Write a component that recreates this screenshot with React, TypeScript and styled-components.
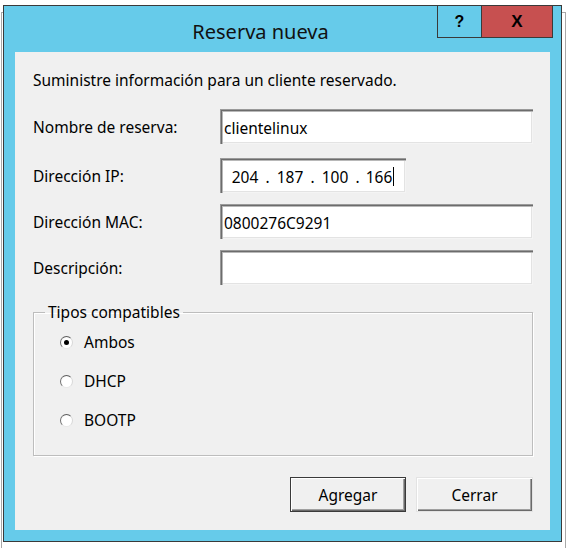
import styled, { createGlobalStyle } from 'styled-components';

const GlobalStyle = createGlobalStyle`
  html, body {
    margin: 0;
    padding: 0;
    background: #ffffff;
  }
  body {
    font-family: "Noto Sans", "Open Sans", sans-serif;
    color: #000;
  }
`;

const Desktop = styled.div`
  position: relative;
  width: 569px;
  height: 548px;
  overflow: hidden;
  box-sizing: border-box;
  padding: 5px 0 0 3px;
`;

// window that sits behind the dialog
const BackWindow = styled.div`
  position: absolute;
  left: 1px;
  top: 12px;
  width: 563px;
  height: 600px;
  border: 1px solid #a8a8a8;
  background: #ffffff;
`;

const Dialog = styled.div`
  position: relative;
  width: 559px;
  height: 537px;
  box-sizing: border-box;
  border: 1px solid #3a3a3a;
  background: #66cbea;
  display: flex;
  flex-direction: column;
`;

const TitleBar = styled.div`
  height: 46px;
  display: flex;
  align-items: flex-start;
  flex-shrink: 0;
`;

const Title = styled.div`
  flex: 1;
  text-align: center;
  padding-left: 80px;
  padding-top: 12px;
  font-size: 20px;
  line-height: 28px;
  color: #111;
`;

const CaptionButton = styled.div<{ $close?: boolean }>`
  margin-top: -1px;
  height: 33px;
  box-sizing: border-box;
  width: ${(p) => (p.$close ? '72px' : '44px')};
  border: 1px solid #3a3a3a;
  border-right: ${(p) => (p.$close ? '1px solid #3a3a3a' : 'none')};
  margin-right: ${(p) => (p.$close ? '8px' : '0')};
  background: ${(p) => (p.$close ? '#c75050' : '#66cbea')};
  display: flex;
  align-items: center;
  justify-content: center;
  font-family: "Liberation Sans", Arial, sans-serif;
  font-weight: bold;
  font-size: ${(p) => (p.$close ? '17px' : '16px')};
  color: #000;
`;

const Client = styled.div`
  flex: 1;
  margin: 0 11px 11px;
  background: #f0f0f0;
  box-sizing: border-box;
  padding: 18px 17px 0 18px;
  display: flex;
  flex-direction: column;
  font-size: 15.5px;
  line-height: 20px;
`;

const Intro = styled.div`
  height: 20px;
`;

const Form = styled.div`
  margin-top: 19px;
  display: flex;
  flex-direction: column;
  gap: 11px;
`;

const Row = styled.div<{ $shift?: number }>`
  display: flex;
  align-items: center;
  margin-top: ${(p) => p.$shift ?? 0}px;
`;

const Label = styled.div`
  width: 187px;
  flex-shrink: 0;
`;

const TextBox = styled.div<{ $width?: number }>`
  width: ${(p) => p.$width ?? 313}px;
  height: 35px;
  box-sizing: border-box;
  background: #ffffff;
  padding: 2px 4px 0 4px;
  line-height: 24px;
  box-shadow: inset 1px 1px 0 #9a9a9a, inset 2px 2px 0 #6c6c6c,
    inset 3px 3px 0 #b8b8b8, inset -1px -1px 0 #f4f4f4,
    inset -2px -2px 0 #e3e3e3;
  display: flex;
  align-items: center;
`;

const IpSegment = styled.span`
  width: 36px;
  text-align: center;
  display: inline-flex;
  justify-content: center;
  align-items: center;
`;

const IpDot = styled.span`
  width: 9px;
  text-align: center;
`;

const Caret = styled.span`
  display: inline-block;
  width: 1px;
  height: 19px;
  background: #000;
  margin-left: 1px;
`;

const Group = styled.fieldset`
  margin: 17px 0 0 0;
  padding: 0;
  height: 154px;
  box-sizing: border-box;
  border: 1px solid #bdbdbd;
  box-shadow: inset 1px 1px 0 #fff, 1px 1px 0 #fff;
`;

const Legend = styled.legend`
  margin-left: 11px;
  padding: 0 3px;
  font-size: 15.5px;
  line-height: 20px;
`;

const RadioList = styled.div`
  display: flex;
  flex-direction: column;
  gap: 19px;
  padding: 10px 0 0 26px;
`;

const RadioRow = styled.div`
  display: flex;
  align-items: center;
  gap: 6px;
  height: 20px;
`;

const RadioCircle = styled.span<{ $checked?: boolean }>`
  width: 13px;
  height: 13px;
  box-sizing: border-box;
  border-radius: 50%;
  border: 1px solid;
  border-color: #5e5e5e #d8d8d8 #e8e8e8 #6e6e6e;
  background: radial-gradient(circle at 60% 60%, #ffffff 55%, #f0f0f0 100%);
  display: flex;
  align-items: center;
  justify-content: center;
  margin-right: 5px;

  &::after {
    content: '';
    width: 5px;
    height: 5px;
    border-radius: 50%;
    background: #000;
    display: ${(p) => (p.$checked ? 'block' : 'none')};
  }
`;

const ButtonBar = styled.div`
  margin-top: 21px;
  display: flex;
  justify-content: flex-end;
  gap: 10px;
`;

const Button = styled.div<{ $default?: boolean }>`
  width: ${(p) => (p.$default ? '116px' : '117px')};
  height: 35px;
  box-sizing: border-box;
  background: #f0f0f0;
  display: flex;
  align-items: center;
  justify-content: center;
  border: 1px solid ${(p) => (p.$default ? '#3a3a3a' : '#e3e3e3')};
  box-shadow: inset 1px 1px 0 #ffffff, inset -1px -1px 0 #6a6a6a,
    inset -2px -2px 0 #a0a0a0;
`;

export default function App() {
  return (
    <Desktop>
      <GlobalStyle />
      <BackWindow />
      <Dialog>
        <TitleBar>
          <Title>Reserva nueva</Title>
          <CaptionButton>?</CaptionButton>
          <CaptionButton $close>X</CaptionButton>
        </TitleBar>
        <Client>
          <Intro>Suministre información para un cliente reservado.</Intro>
          <Form>
            <Row>
              <Label>Nombre de reserva:</Label>
              <TextBox>clientelinux</TextBox>
            </Row>
            <Row $shift={3}>
              <Label>Dirección IP:</Label>
              <TextBox $width={186} style={{ paddingLeft: 7 }}>
                <IpSegment>204</IpSegment>
                <IpDot>.</IpDot>
                <IpSegment>187</IpSegment>
                <IpDot>.</IpDot>
                <IpSegment>100</IpSegment>
                <IpDot>.</IpDot>
                <IpSegment>
                  166
                  <Caret />
                </IpSegment>
              </TextBox>
            </Row>
            <Row>
              <Label>Dirección MAC:</Label>
              <TextBox>0800276C9291</TextBox>
            </Row>
            <Row>
              <Label>Descripción:</Label>
              <TextBox />
            </Row>
          </Form>
          <Group>
            <Legend>Tipos compatibles</Legend>
            <RadioList>
              <RadioRow>
                <RadioCircle $checked />
                Ambos
              </RadioRow>
              <RadioRow>
                <RadioCircle />
                DHCP
              </RadioRow>
              <RadioRow>
                <RadioCircle />
                BOOTP
              </RadioRow>
            </RadioList>
          </Group>
          <ButtonBar>
            <Button $default>Agregar</Button>
            <Button>Cerrar</Button>
          </ButtonBar>
        </Client>
      </Dialog>
    </Desktop>
  );
}
